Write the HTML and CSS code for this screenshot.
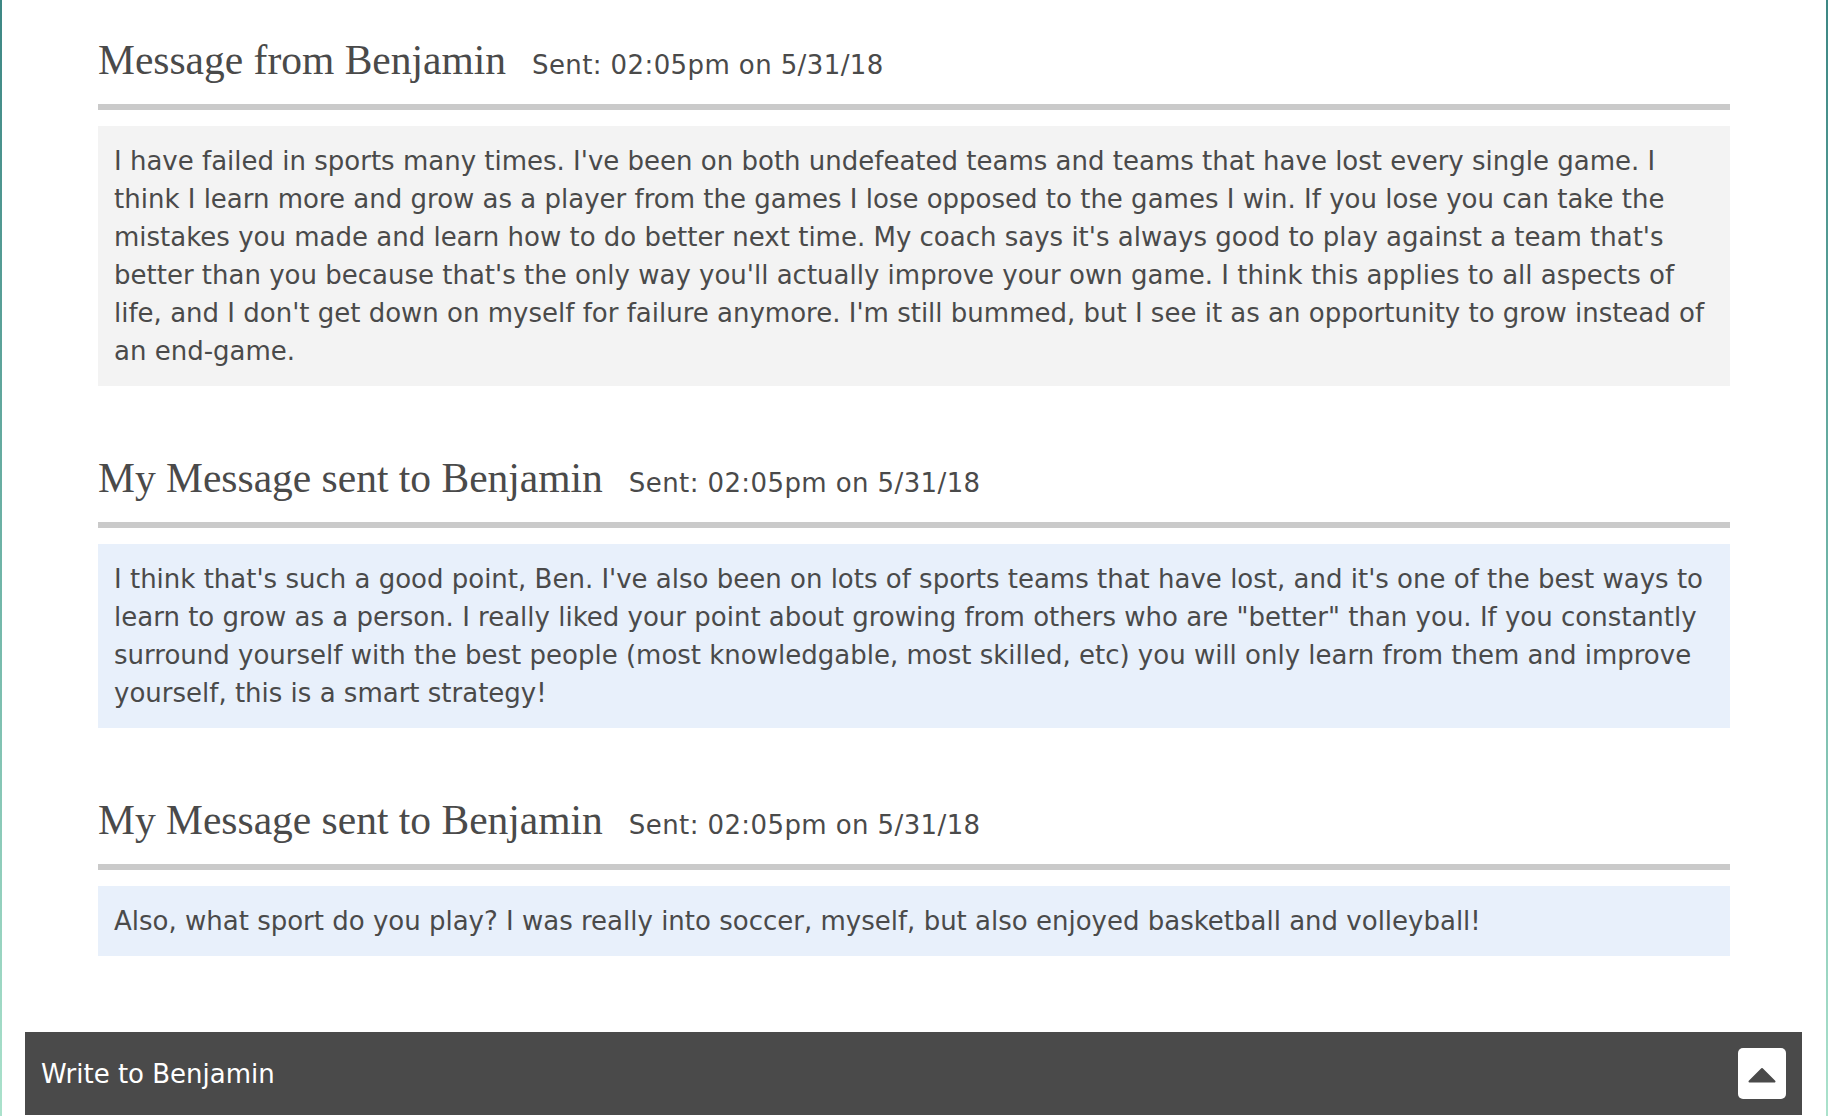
FILE: index.html
```html
<!DOCTYPE html>
<html lang="en">
<head>
<meta charset="utf-8">
<title>Messages with Benjamin</title>
<link rel="stylesheet" href="styles.css">
</head>
<body>
<div class="page">
  <main class="thread">
    <section class="msg">
      <header class="msg-head">
        <h2 class="msg-title">Message from Benjamin</h2>
        <span class="msg-sent">Sent: 02:05pm on 5/31/18</span>
      </header>
      <div class="msg-body msg-body--in">
        <p>I have failed in sports many times. I've been on both undefeated teams and teams that have lost every single game. I think I learn more and grow as a player from the games I lose opposed to the games I win. If you lose you can take the mistakes you made and learn how to do better next time. My coach says it's always good to play against a team that's better than you because that's the only way you'll actually improve your own game. I think this applies to all aspects of life, and I don't get down on myself for failure anymore. I'm still bummed, but I see it as an opportunity to grow instead of an end-game.</p>
      </div>
    </section>
    <section class="msg">
      <header class="msg-head">
        <h2 class="msg-title">My Message sent to Benjamin</h2>
        <span class="msg-sent">Sent: 02:05pm on 5/31/18</span>
      </header>
      <div class="msg-body msg-body--out">
        <p>I think that's such a good point, Ben. I've also been on lots of sports teams that have lost, and it's one of the best ways to learn to grow as a person. I really liked your point about growing from others who are "better" than you. If you constantly surround yourself with the best people (most knowledgable, most skilled, etc) you will only learn from them and improve yourself, this is a smart strategy!</p>
      </div>
    </section>
    <section class="msg">
      <header class="msg-head">
        <h2 class="msg-title">My Message sent to Benjamin</h2>
        <span class="msg-sent">Sent: 02:05pm on 5/31/18</span>
      </header>
      <div class="msg-body msg-body--out">
        <p>Also, what sport do you play? I was really into soccer, myself, but also enjoyed basketball and volleyball!</p>
      </div>
    </section>
  </main>
  <footer class="composer">
    <span class="composer-label">Write to Benjamin</span>
    <button class="composer-toggle" type="button" aria-label="Expand">
      <svg width="28" height="16" viewBox="0 0 28 16" aria-hidden="true"><polygon points="14,2 26.5,14.5 1.5,14.5" fill="#4a4a4a" stroke="#4a4a4a" stroke-width="2" stroke-linejoin="round"/></svg>
    </button>
  </footer>
</div>
</body>
</html>
```

FILE: styles.css
```css
html, body {
  margin: 0;
  padding: 0;
  background: #ffffff;
}

body {
  color: #4a4a4a;
  font-family: "DejaVu Sans", Verdana, sans-serif;
}

.page {
  box-sizing: border-box;
  min-height: 100vh;
  padding-top: 35px;
  border-style: solid;
  border-width: 0 2px;
  border-image: linear-gradient(to bottom, #3d8784, #73b8aa 55%, #abe2cc) 1;
  overflow: hidden;
}

.thread {
  display: flex;
  flex-direction: column;
  gap: 67px;
  padding: 0 96px;
}

.msg-head {
  display: flex;
  align-items: baseline;
  gap: 26px;
  padding-bottom: 19px;
  border-bottom: 6px solid #cacaca;
  margin-bottom: 16px;
}

.msg-title {
  margin: 0;
  font-family: "Liberation Serif", "Times New Roman", serif;
  font-weight: 400;
  font-size: 41.5px;
  line-height: 50px;
  color: #4a4a4a;
}

.msg-sent {
  font-size: 26px;
  letter-spacing: 0.4px;
  color: #4a4a4a;
}

.msg-body {
  padding: 16px;
}

.msg-body p {
  margin: 0;
  font-size: 26px;
  line-height: 38px;
}

.msg-body--in {
  background: #f3f3f3;
}

.msg-body--out {
  background: #e8f0fb;
}

.composer {
  display: flex;
  align-items: center;
  justify-content: space-between;
  margin: 76px 24px 0 23px;
  padding: 16px;
  background: #4a4a4a;
}

.composer-label {
  color: #ffffff;
  font-size: 26px;
}

.composer-toggle {
  display: flex;
  align-items: center;
  justify-content: center;
  width: 48px;
  height: 51px;
  padding: 2px 0 0;
  border: 0;
  border-radius: 5px;
  background: #ffffff;
}
```
